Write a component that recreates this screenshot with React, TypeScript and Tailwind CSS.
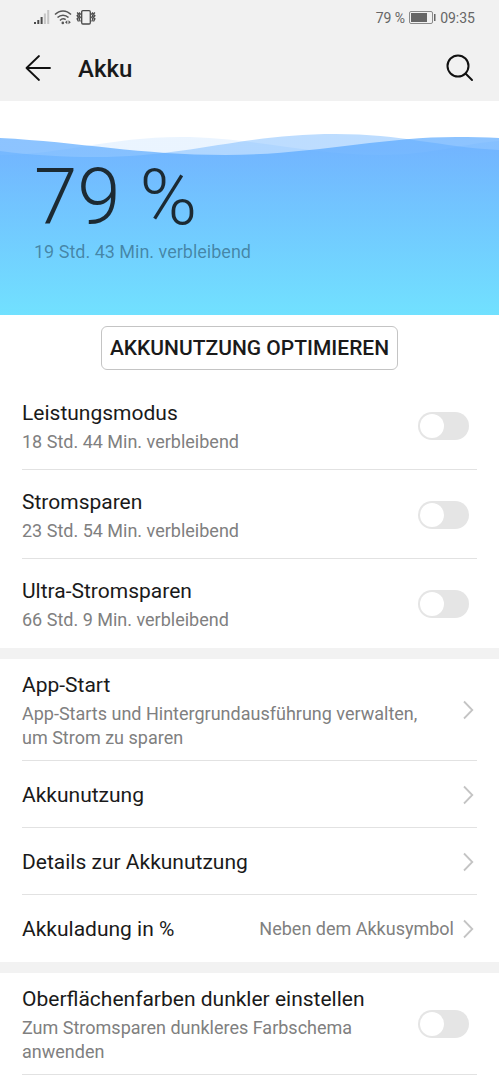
import type { ReactNode } from "react";

function Signal() {
  return (
    <svg width="16" height="15" viewBox="0 0 16 15" aria-hidden="true">
      <path d="M0 12h2v2H0zM3.3 10h2v4h-2zM6.6 7h2v7h-2z" fill="#4a4a4a" />
      <path d="M9.9 3.5h2V14h-2zM13.2 0h2v14h-2z" fill="#c6c6c6" />
    </svg>
  );
}

function Wifi() {
  return (
    <svg width="18" height="15" viewBox="0 0 18 15" fill="none" stroke="#555" strokeWidth="1.5" aria-hidden="true">
      <path d="M1 4.6C5.6-.3 12.4-.3 17 4.6" />
      <path d="M3.5 7.6c3.2-3.3 7.8-3.3 11 0" />
      <path d="M6 10.4c1.7-1.8 4-1.9 5.7-.7" />
      <circle cx="8.8" cy="12.9" r="1.3" fill="#555" stroke="none" />
      <path d="M13.3 10.3v4L11 12.3zM14.5 10.3v4l2.3-2z" fill="#555" stroke="none" />
    </svg>
  );
}

function Vibrate() {
  return (
    <svg width="20" height="15" viewBox="0 0 20 15" fill="none" stroke="#4a4a4a" strokeWidth="1.3" aria-hidden="true">
      <rect x="5.7" y="0.7" width="8.6" height="13.3" rx="1.2" />
      <path d="M1.1 2.5l1.4 1.6-1.4 1.6 1.4 1.6-1.4 1.6 1.4 2.6M3.1 2.5l1.2 1.6-1.2 1.6 1.2 1.6-1.2 1.6 1.2 2.6" />
      <path d="M18.9 2.5l-1.4 1.6 1.4 1.6-1.4 1.6 1.4 1.6-1.4 2.6M16.9 2.5l-1.2 1.6 1.2 1.6-1.2 1.6 1.2 1.6-1.2 2.6" />
    </svg>
  );
}

function Battery() {
  return (
    <svg width="27" height="13" viewBox="0 0 27 13" aria-hidden="true">
      <rect x="0.5" y="0.5" width="23" height="12" rx="1.5" fill="none" stroke="#8a8a8a" />
      <rect x="2" y="2" width="16" height="9" fill="#666" />
      <rect x="25" y="3" width="1.5" height="7" fill="#666" />
    </svg>
  );
}

function Chevron() {
  return (
    <svg width="12" height="20" viewBox="0 0 12 20" fill="none" stroke="#c4c4c4" strokeWidth="1.8" className="mr-[3px] shrink-0" aria-hidden="true">
      <path d="M2 1.5l8.3 8.5L2 18.5" />
    </svg>
  );
}

// Three overlapping translucent waves over the charge level
function Waves() {
  return (
    <svg viewBox="0 0 498 214" preserveAspectRatio="none" className="absolute inset-0 size-full" aria-hidden="true">
      <defs>
        <linearGradient id="water" gradientUnits="userSpaceOnUse" x1="0" y1="50" x2="0" y2="214">
          <stop offset="0" stopColor="#52a5ff" />
          <stop offset="1" stopColor="#51daff" />
        </linearGradient>
      </defs>
      <g fill="url(#water)">
        <path opacity="0.12" d="M0 54C60 54 110 36 180 36C250 36 310 54 380 54C430 54 465 42 498 40V214H0Z" />
        <path opacity="0.38" d="M0 50C30 54 65 56 95 56C190 56 240 33 335 33C400 33 440 46 498 49V214H0Z" />
        <path opacity="0.66" d="M0 37C80 41 140 54 225 54C310 54 380 36 455 36C470 36 485 36 498 37V214H0Z" />
      </g>
    </svg>
  );
}

function Label({ title, note }: { title: string; note?: string }) {
  return (
    <span className="flex min-w-0 flex-1 flex-col gap-0.5">
      <span className="text-[21px] leading-[30px] text-[#1a1a1a]">{title}</span>
      {note && <span className="text-lg leading-6 text-[#808080]">{note}</span>}
    </span>
  );
}

function SwitchRow({ title, note }: { title: string; note: string }) {
  return (
    <label className="flex min-h-[89px] items-center gap-10 pt-[11px] pb-2.5">
      <Label title={title} note={note} />
      <input
        type="checkbox"
        role="switch"
        className="mr-2 h-7 w-[51px] shrink-0 appearance-none rounded-full bg-[#e5e5e5] p-0.5 before:block before:size-6 before:rounded-full before:bg-white checked:bg-[#007dff] checked:before:ml-auto"
      />
    </label>
  );
}

function LinkRow({ title, note, value }: { title: string; note?: string; value?: string }) {
  return (
    <a href="#" className="flex min-h-[67px] items-center pt-[11px] pb-2.5">
      <Label title={title} note={note} />
      <span className="flex min-w-10 shrink-0 items-center justify-end gap-2">
        {value && <span className="text-lg leading-6 text-[#808080]">{value}</span>}
        <Chevron />
      </span>
    </a>
  );
}

function Group({ children }: { children: ReactNode }) {
  return <section className="divide-y divide-[#e2e2e2] px-[22px]">{children}</section>;
}

function Gap() {
  return <div className="h-[11px] bg-[#f2f2f2]" />;
}

export default function App() {
  return (
    <div className="min-h-screen bg-white font-[Roboto,sans-serif] text-[#1a1a1a]">
      <header className="bg-[#f1f1f1]">
        <div className="flex h-[35px] items-center justify-between pr-6 pl-[34px] text-sm text-[#666]">
          <div className="flex items-center gap-1">
            <Signal />
            <Wifi />
            <Vibrate />
          </div>
          <div className="flex items-center gap-1">
            <span>79 %</span>
            <Battery />
            <span>09:35</span>
          </div>
        </div>
        <div className="flex h-[66px] items-center gap-[26px] px-6">
          <button aria-label="Zurück">
            <svg width="28" height="28" viewBox="0 0 28 28" fill="none" stroke="#111" strokeWidth="1.8" strokeLinecap="round" strokeLinejoin="round">
              <path d="M26 14H2.500M15 2L2.500 14L15 26" />
            </svg>
          </button>
          <h1 className="flex-1 pt-0.5 text-2xl font-medium">Akku</h1>
          <button aria-label="Suchen">
            <svg width="30" height="28" viewBox="0 0 30 28" fill="none" stroke="#111" strokeWidth="2" strokeLinecap="round">
              <circle cx="13" cy="12" r="10.5" />
              <path d="M20.500 19.500L27 26" />
            </svg>
          </button>
        </div>
      </header>

      <div className="relative h-[214px]">
        <Waves />
        <div className="relative px-[34px] pt-[57px]">
          <p className="text-[78px] leading-[80px] font-light text-[#1c2a33]">79 %</p>
          <p className="pt-0.5 text-lg leading-6 text-[#0f2a3a]/45">19 Std. 43 Min. verbleibend</p>
        </div>
      </div>

      <div className="flex justify-center py-[11px]">
        <button className="h-11 rounded-md border border-[#c4c4c4] px-2 pt-0.5 text-[21px] font-medium">AKKUNUTZUNG OPTIMIEREN</button>
      </div>

      <Group>
        <SwitchRow title="Leistungsmodus" note="18 Std. 44 Min. verbleibend" />
        <SwitchRow title="Stromsparen" note="23 Std. 54 Min. verbleibend" />
        <SwitchRow title="Ultra-Stromsparen" note="66 Std. 9 Min. verbleibend" />
      </Group>
      <Gap />
      <Group>
        <LinkRow title="App-Start" note="App-Starts und Hintergrundausführung verwalten, um Strom zu sparen" />
        <LinkRow title="Akkunutzung" />
        <LinkRow title="Details zur Akkunutzung" />
        <LinkRow title="Akkuladung in %" value="Neben dem Akkusymbol" />
      </Group>
      <Gap />
      <Group>
        <SwitchRow title="Oberflächenfarben dunkler einstellen" note="Zum Stromsparen dunkleres Farbschema anwenden" />
        <div />
      </Group>
    </div>
  );
}
